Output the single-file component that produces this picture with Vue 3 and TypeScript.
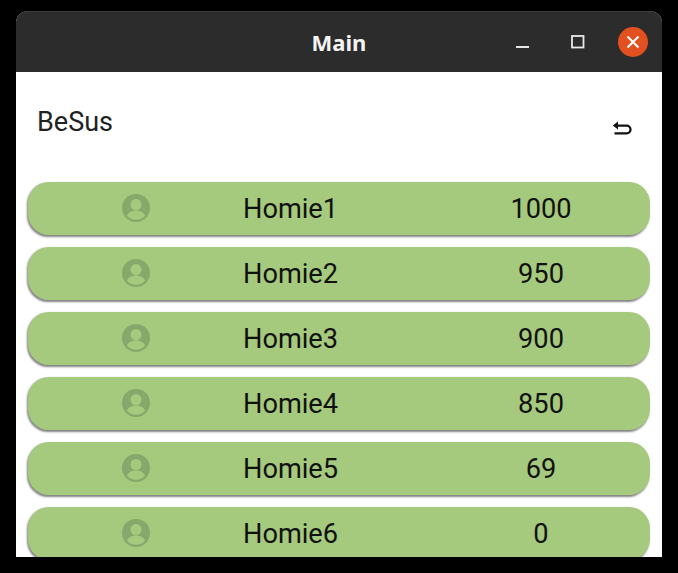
<template>
  <div class="screen">
    <div class="window">
      <header class="titlebar">
        <span class="title">Main</span>
        <div class="controls">
          <svg class="ctl" width="14" height="14" viewBox="0 0 14 14"><rect x="0" y="11" width="13" height="2" fill="#e4e4e4" /></svg>
          <svg class="ctl" width="14" height="14" viewBox="0 0 14 14"><rect x="1" y="1" width="11.5" height="11.5" fill="none" stroke="#e8e8e8" stroke-width="1.8" /></svg>
          <button class="close">
            <svg width="14" height="14" viewBox="0 0 14 14"><path d="M1.5 1.5 12.5 12.5M12.5 1.5 1.5 12.5" stroke="#fff" stroke-width="2" fill="none" /></svg>
          </button>
        </div>
      </header>
      <main class="content">
        <div class="head">
          <h1 class="brand">BeSus</h1>
          <svg class="back" width="20" height="16" viewBox="0 0 20 16">
            <path d="M6 .6 .8 4.6 6 8.6z" fill="#111" />
            <path d="M3 4.6H14.6a3.9 3.9 0 0 1 0 7.8H2.5" fill="none" stroke="#111" stroke-width="2.3" />
          </svg>
        </div>
        <ul class="list">
          <li v-for="p in players" :key="p.name" class="row">
            <svg class="avatar" width="30" height="30" viewBox="0 0 30 30">
              <circle cx="15" cy="15" r="14" fill="#86a86a" />
              <circle cx="15" cy="11.6" r="5.6" fill="#a5c97d" />
              <path d="M6 22.8c1.2-3.8 5-5.2 9-5.2s7.800 1.400 9 5.200A12 12 0 0 1 15 26.800a12 12 0 0 1-9-4z" fill="#a5c97d" />
            </svg>
            <span class="name">{{ p.name }}</span>
            <span class="score">{{ p.score }}</span>
          </li>
        </ul>
      </main>
    </div>
  </div>
</template>

<script setup lang="ts">
const players: { name: string; score: number }[] = [
  { name: 'Homie1', score: 1000 },
  { name: 'Homie2', score: 950 },
  { name: 'Homie3', score: 900 },
  { name: 'Homie4', score: 850 },
  { name: 'Homie5', score: 69 },
  { name: 'Homie6', score: 0 },
];
</script>

<style>
html, body {
  margin: 0;
  background: #000;
}
</style>

<style scoped>
.screen {
  width: 678px;
  height: 573px;
  background: #000;
  padding: 11px 16px 16px;
  box-sizing: border-box;
  font-family: Roboto, sans-serif;
}

.window {
  height: 546px;
  display: flex;
  flex-direction: column;
  background: #fff;
  border-radius: 12px 12px 0 0;
  overflow: hidden;
}

.titlebar {
  height: 61px;
  flex: none;
  position: relative;
  display: flex;
  align-items: center;
  justify-content: center;
  background: #2c2c2c;
  border-top: 1px solid #3c3c3c;
  box-sizing: border-box;
}

.title {
  color: #f4f4f4;
  font-family: "Noto Sans", sans-serif;
  font-weight: 700;
  font-size: 22px;
}

.controls {
  position: absolute;
  top: 15px;
  right: 14px;
  display: flex;
  align-items: center;
}

.ctl {
  margin-right: 41px;
}

.controls .ctl:nth-child(1) {
  margin-top: -1px;
  margin-left: 1px;
}

.controls .ctl:nth-child(2) {
  margin-right: 33px;
  margin-top: -1px;
}

.close {
  width: 30px;
  height: 30px;
  padding: 0;
  border: none;
  border-radius: 50%;
  background: #e2501f;
  display: flex;
  align-items: center;
  justify-content: center;
}

.content {
  flex: 1;
  min-height: 0;
  overflow: hidden;
}

.head {
  height: 110px;
  display: flex;
  justify-content: space-between;
  padding: 34px 30px 0 21px;
  box-sizing: border-box;
}

.brand {
  margin: 0;
  color: #222;
  font-weight: 400;
  font-size: 27px;
  line-height: 32px;
}

.back {
  margin-top: 15px;
}

.list {
  list-style: none;
  margin: 0;
  padding: 0 12px;
  display: flex;
  flex-direction: column;
  gap: 12.5px;
}

.row {
  height: 52.5px;
  flex: none;
  display: flex;
  align-items: center;
  padding-left: 93px;
  background: #a5c97d;
  border-radius: 21px;
  box-shadow: -1px 1.5px 2px rgba(50, 50, 50, 0.6);
  color: #111;
  font-size: 27.2px;
}

.avatar {
  flex: none;
}

.name {
  margin: 2px 0 0 92px;
  width: 150px;
}

.score {
  margin: 2px 0 0 93px;
  width: 110px;
  text-align: center;
}
</style>
